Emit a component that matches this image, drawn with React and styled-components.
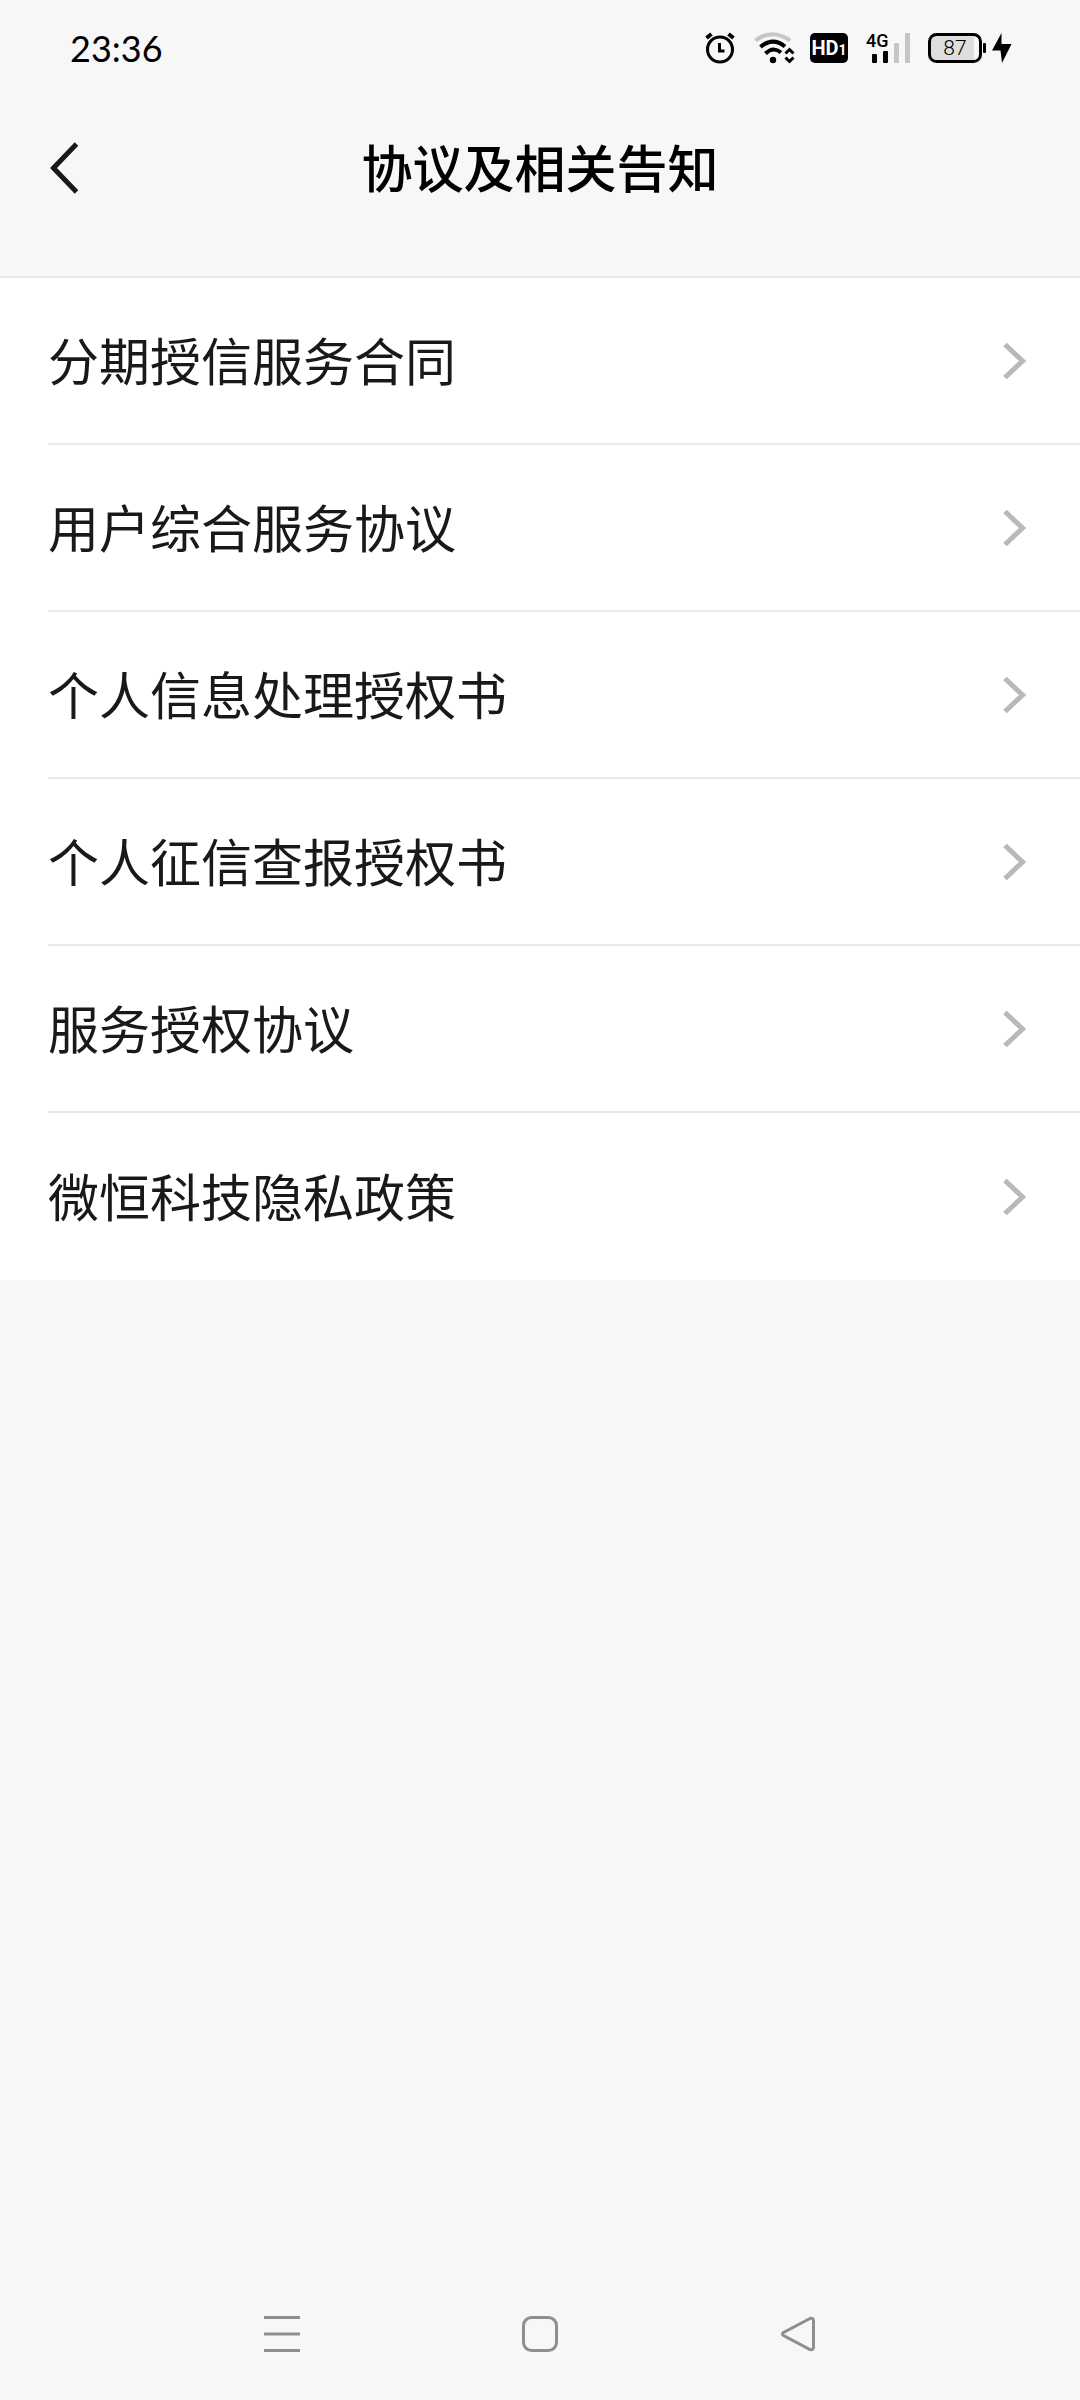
import React from "react";
import styled, { createGlobalStyle } from "styled-components";

const GlobalStyle = createGlobalStyle`
  * { box-sizing: border-box; }
  body {
    margin: 0;
    background: #f7f7f7;
    font-family: "Noto Sans CJK SC", "Noto Sans", sans-serif;
  }
`;

const Screen = styled.div`
  display: flex;
  flex-direction: column;
  min-height: 100vh;
  background: #f7f7f7;
`;

const StatusBar = styled.div`
  display: flex;
  align-items: center;
  justify-content: space-between;
  height: 96px;
  padding: 0 68px 0 70px;
  color: #000;
`;

const Time = styled.time`
  font: 400 36px/48px Lato, sans-serif;
`;

const StatusIcons = styled.div`
  display: flex;
  align-items: center;
  gap: 16px;

  svg { display: block; overflow: visible; }
`;

const HdBadge = styled.span`
  display: flex;
  align-items: baseline;
  justify-content: center;
  width: 38px;
  height: 30px;
  margin-right: 2px;
  border-radius: 5px;
  background: #000;
  color: #fff;
  font: 700 20px/30px "Roboto", sans-serif;

  small { font-size: 14px; }
`;

const Power = styled.div`
  display: flex;
  align-items: center;
  gap: 6px;
`;

const Header = styled.header`
  display: grid;
  grid-template-columns: 96px 1fr 96px;
  align-items: center;
  height: 182px;
  padding-bottom: 36px;
  border-bottom: 2px solid #e9e9e9;
`;

const BackButton = styled.button`
  display: flex;
  align-items: center;
  height: 96px;
  padding: 0 0 0 50px;
  border: 0;
  background: none;
`;

const Title = styled.h1`
  margin: 0;
  padding-bottom: 4px;
  text-align: center;
  color: #000;
  font-size: 51px;
  line-height: 72px;
  font-weight: 500;
`;

const List = styled.ul`
  margin: 0;
  padding: 0 0 0 48px;
  list-style: none;
  background: #fff;
`;

const Item = styled.li`
  height: 167px;
  border-bottom: 2px solid #e9e9e9;

  &:last-child { border-bottom: 0; }
`;

const ItemLink = styled.a`
  display: flex;
  align-items: center;
  justify-content: space-between;
  height: 100%;
  padding-right: 54px;
  color: #191919;
  font-size: 51px;
  line-height: 72px;
  text-decoration: none;
`;

const ItemLabel = styled.span`
  padding-bottom: 4px;
`;

const NavBar = styled.nav`
  display: flex;
  height: 132px;
  margin-top: auto;
  padding: 0 153px;
`;

const NavButton = styled.button`
  display: flex;
  flex: 1;
  align-items: center;
  justify-content: center;
  padding: 0;
  border: 0;
  background: none;
`;

const agreements = [
  "分期授信服务合同",
  "用户综合服务协议",
  "个人信息处理授权书",
  "个人征信查报授权书",
  "服务授权协议",
  "微恒科技隐私政策",
];

const AlarmIcon = () => (
  <svg width="33" height="32" viewBox="0 0 33 32" fill="none" stroke="#000" aria-hidden="true">
    <circle cx="15" cy="17.5" r="12.5" strokeWidth="3" />
    <path d="M14.5 11v8h5" strokeWidth="3" />
    <path d="M1.5 6l5-4M28.500 6l-5-4" strokeWidth="4" />
  </svg>
);

const WifiIcon = () => (
  <svg width="40" height="32" viewBox="0 0 40 32" fill="none" aria-hidden="true">
    <path d="M1.500 8.500Q18 -4 36 8.500" stroke="#c6c6c6" strokeWidth="4" />
    <path d="M6.500 15Q18.500 4.500 31 14.500" stroke="#000" strokeWidth="4" />
    <path d="M11.500 21.500Q19 14 27 20.500" stroke="#000" strokeWidth="4" />
    <circle cx="19" cy="28" r="3.200" fill="#000" />
    <path d="M31.500 21.500l4-4 4 4M31.500 25.500l4 4 4-4" stroke="#000" strokeWidth="3" />
  </svg>
);

const SignalIcon = () => (
  <svg width="46" height="32" viewBox="0 0 46 32" aria-label="4G">
    <text x="0" y="15" fontFamily="Roboto, sans-serif" fontSize="18" fontWeight="500">4G</text>
    <rect x="6" y="22" width="5" height="9" rx="1" />
    <rect x="17" y="19" width="5" height="12" rx="1" />
    <rect x="28" y="11" width="5" height="20" rx="1" fill="#c6c6c6" />
    <rect x="39" y="1" width="5" height="30" rx="1" fill="#c6c6c6" />
  </svg>
);

const BatteryIcon = () => (
  <svg width="58" height="32" viewBox="0 0 58 32" aria-label="87%">
    <rect x="1.500" y="2.500" width="51" height="27" rx="7" fill="#f7f7f7" />
    <path d="M8 3h38v26H8a6 6 0 0 1-6-6V9a6 6 0 0 1 6-6z" fill="#dedede" />
    <rect x="1.500" y="2.500" width="51" height="27" rx="7" fill="none" stroke="#000" strokeWidth="3" />
    <rect x="55" y="11" width="3" height="10" rx="1" />
    <text x="27" y="23" textAnchor="middle" fontFamily="Roboto, sans-serif" fontSize="21" fontWeight="300">87</text>
  </svg>
);

const BoltIcon = () => (
  <svg width="20" height="32" viewBox="0 0 20 32" aria-hidden="true">
    <path d="M9.500 1L0 18.500h8.500L10 31 19.500 12h-10z" />
  </svg>
);

const Chevron = () => (
  <svg width="23" height="36" viewBox="0 0 23 36" fill="none" aria-hidden="true">
    <path d="M2 1.500L19.500 18 2 34.500" stroke="#b9b9b9" strokeWidth="5" />
  </svg>
);

export default function App() {
  return (
    <Screen>
      <GlobalStyle />
      <StatusBar>
        <Time>23:36</Time>
        <StatusIcons>
          <AlarmIcon />
          <WifiIcon />
          <HdBadge>HD<small>1</small></HdBadge>
          <SignalIcon />
          <Power>
            <BatteryIcon />
            <BoltIcon />
          </Power>
        </StatusIcons>
      </StatusBar>
      <Header>
        <BackButton type="button" aria-label="返回">
          <svg width="30" height="52" viewBox="0 0 30 52" fill="none">
            <path d="M26.500 2L3.500 26l23 24" stroke="#191919" strokeWidth="5" />
          </svg>
        </BackButton>
        <Title>协议及相关告知</Title>
      </Header>
      <List>
        {agreements.map((name) => (
          <Item key={name}>
            <ItemLink href="#">
              <ItemLabel>{name}</ItemLabel>
              <Chevron />
            </ItemLink>
          </Item>
        ))}
      </List>
      <NavBar>
        <NavButton type="button" aria-label="最近任务">
          <svg width="36" height="36" viewBox="0 0 36 36" fill="none">
            <path d="M0 1.500h36M0 18h36M0 34.500h36" stroke="#8e8e8e" strokeWidth="3" />
          </svg>
        </NavButton>
        <NavButton type="button" aria-label="主屏幕">
          <svg width="36" height="36" viewBox="0 0 36 36" fill="none">
            <rect x="1.500" y="1.500" width="33" height="33" rx="8" stroke="#8e8e8e" strokeWidth="3" />
          </svg>
        </NavButton>
        <NavButton type="button" aria-label="返回上一页">
          <svg width="36" height="36" viewBox="0 0 36 36" fill="none">
            <path d="M30 2.500L3.500 16.500q-2 1.500 0 3L30 33.500q3.500 1 3.500-2.500V5q0-3.500-3.500-2.500z" stroke="#8e8e8e" strokeWidth="3" />
          </svg>
        </NavButton>
      </NavBar>
    </Screen>
  );
}
